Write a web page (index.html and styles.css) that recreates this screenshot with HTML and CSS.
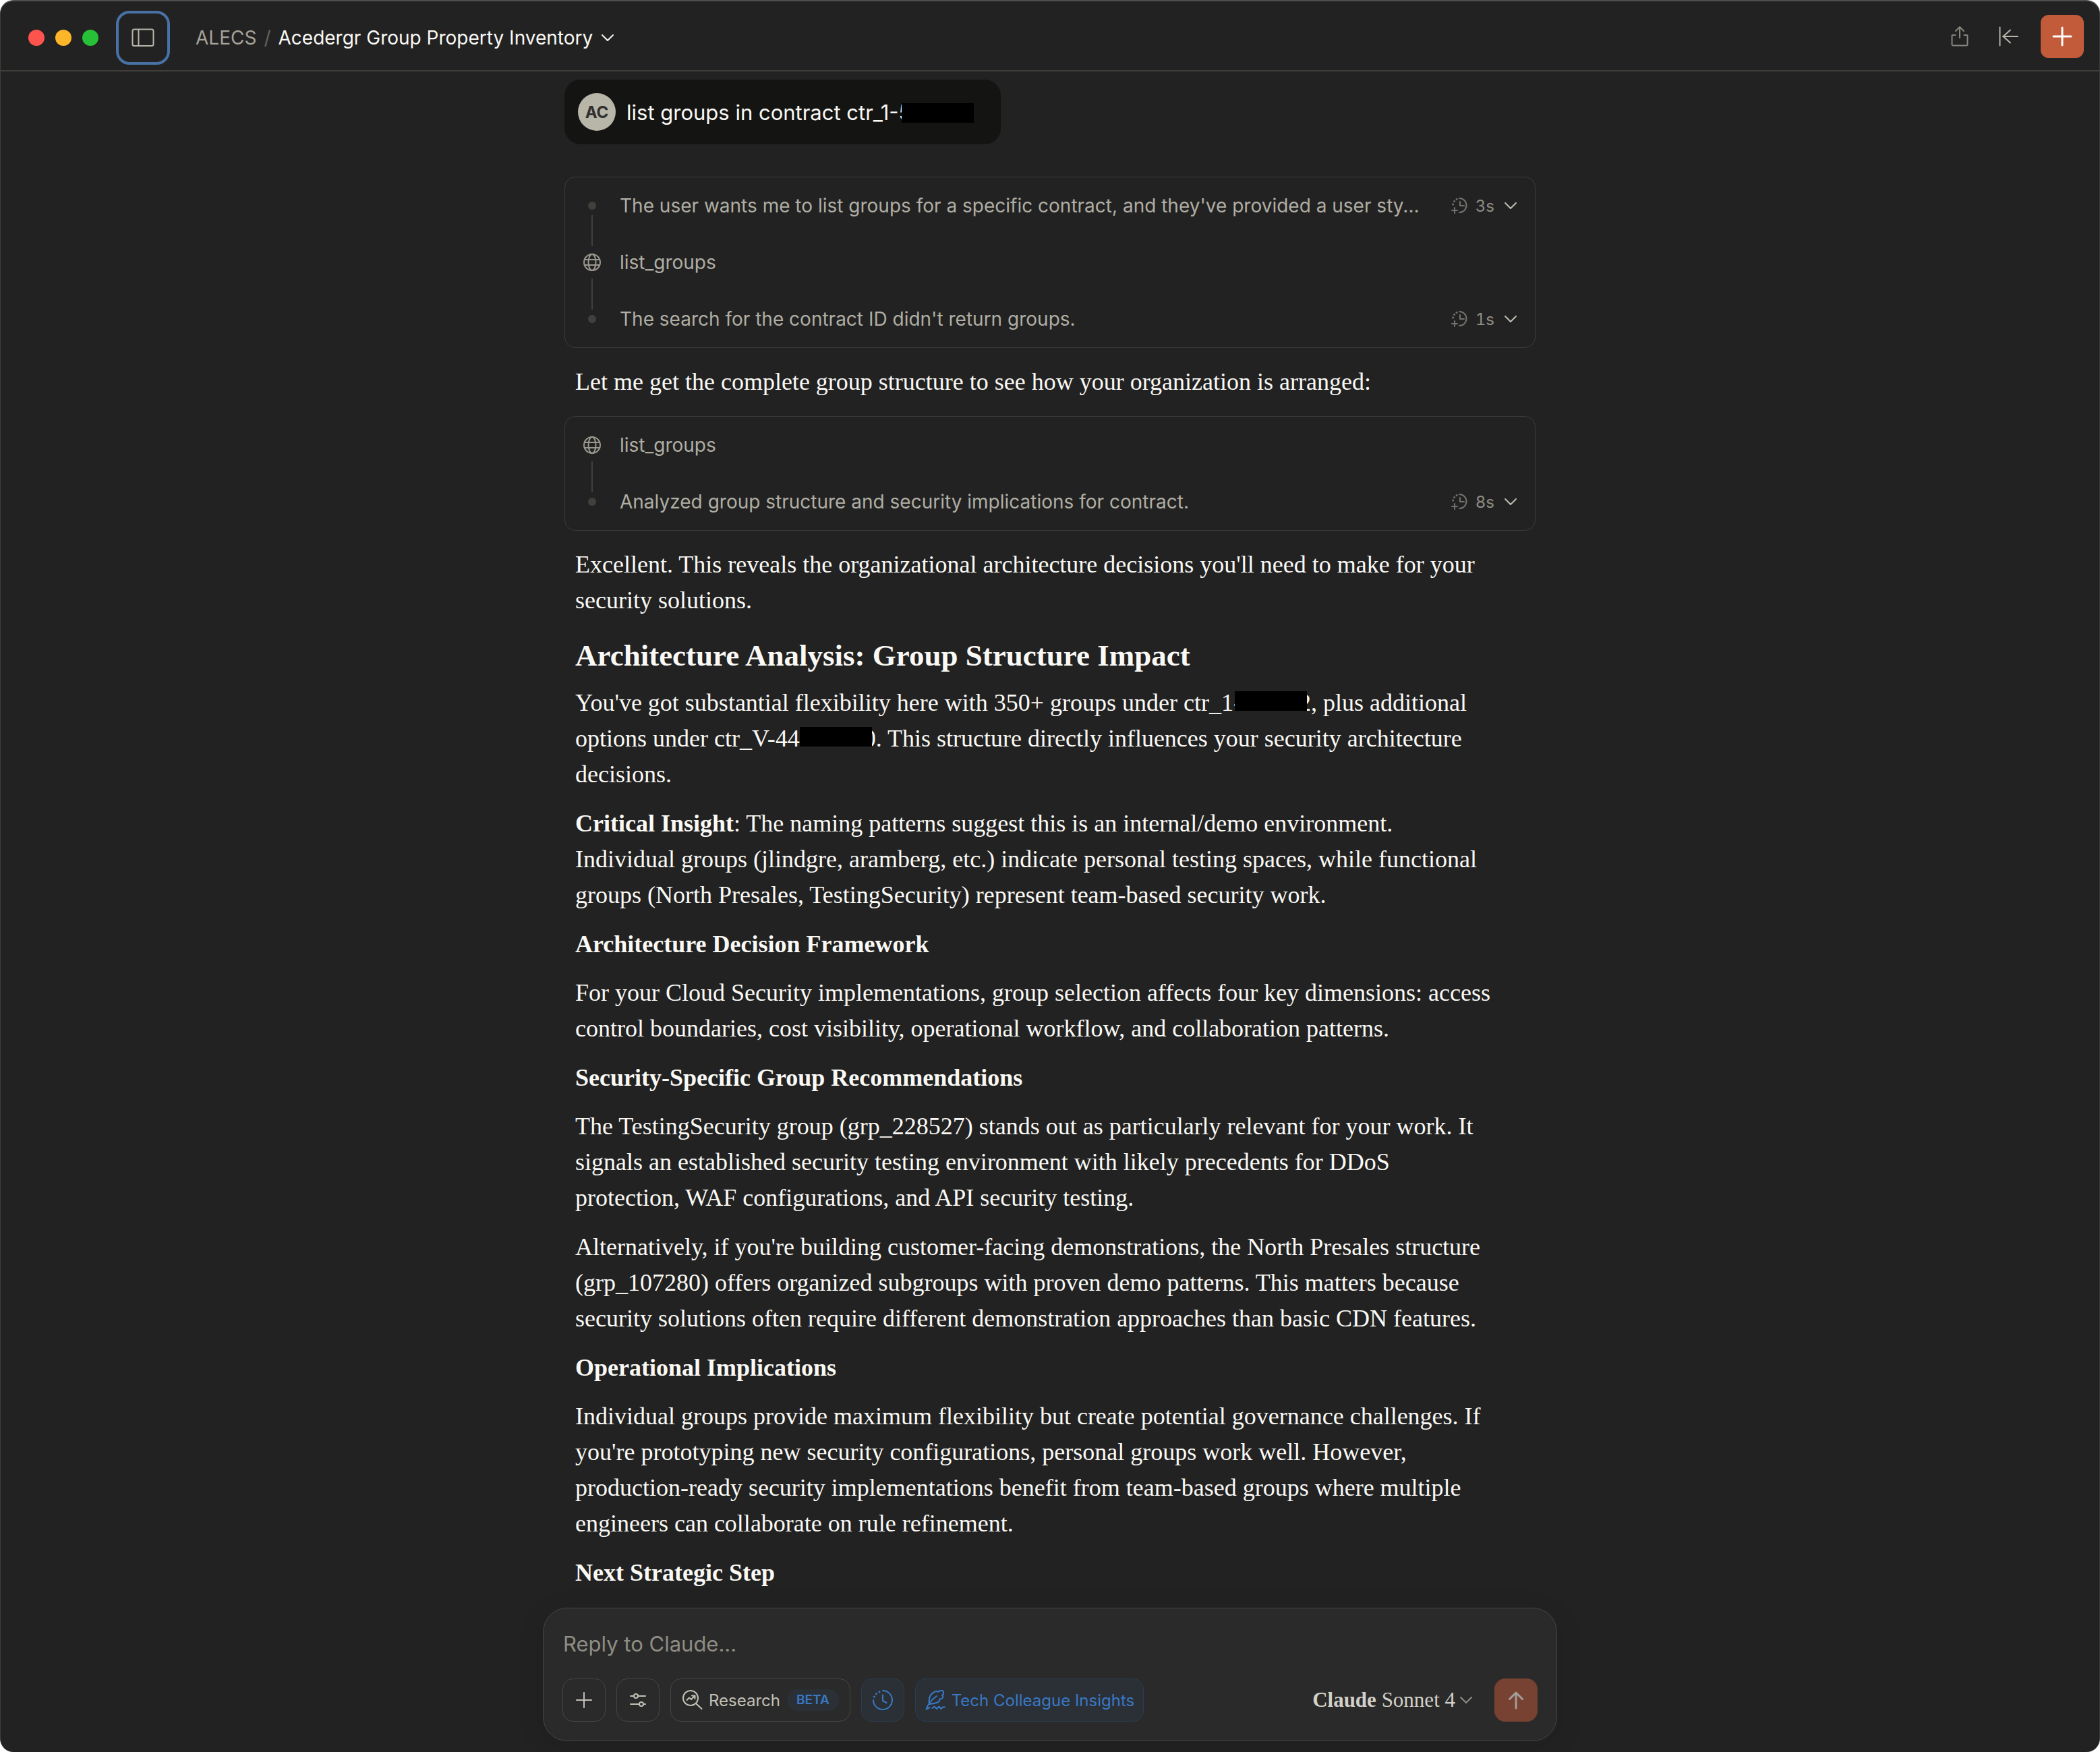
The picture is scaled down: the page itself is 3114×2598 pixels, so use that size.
FILE: index.html
```html
<!DOCTYPE html>
<html lang="en">
<head>
<meta charset="utf-8">
<title>Acedergr Group Property Inventory</title>
<meta name="viewport" content="width=device-width, initial-scale=1">
<link rel="stylesheet" href="styles.css">
</head>
<body>
<svg class="sprite" aria-hidden="true">
  <symbol id="chevron" viewBox="0 0 20 12"><path d="M2 2l8 8 8-8"/></symbol>
  <symbol id="globe" viewBox="0 0 28 28"><circle cx="14" cy="14" r="12"/><ellipse cx="14" cy="14" rx="5.5" ry="12"/><path d="M3 10h22M3 18h22"/></symbol>
  <symbol id="timer" viewBox="0 0 26 26"><path d="M12 2a10.500 10.500 0 1 1 0 21M13 7v6h6M5 16v8M1 20h8"/><path stroke-width="3" d="M8 3.500h.1M4.500 6.500h.1M2.500 11h.1"/></symbol>
</svg>
<div class="window">
  <header class="titlebar">
    <div class="titlebar-left">
      <div class="lights"><span class="light red"></span><span class="light amber"></span><span class="light green"></span></div>
      <button class="sidebar-toggle" type="button" aria-label="Toggle sidebar">
        <svg width="34" height="28" viewBox="0 0 34 28"><rect x="1.500" y="1.500" width="31" height="24.500" rx="2.500"/><path d="M10.500 2v24"/></svg>
      </button>
      <nav class="crumbs" aria-label="Breadcrumb">
        <a class="crumb" href="#">ALECS</a><span class="slash">/</span>
        <button class="chat-title" type="button">Acedergr Group Property Inventory<svg class="chevron" width="20" height="12"><use href="#chevron"/></svg></button>
      </nav>
    </div>
    <div class="titlebar-right">
      <button class="icon-button share" type="button" aria-label="Share">
        <svg width="28" height="32" viewBox="0 0 28 32"><path d="M7.500 14H3.500a1 1 0 0 0-1 1v13a1.500 1.500 0 0 0 1.500 1.500h20a1.500 1.500 0 0 0 1.500-1.500V15a1 1 0 0 0-1-1h-4M14 18V2M8 8l6-6 6 6"/></svg>
      </button>
      <button class="icon-button collapse" type="button" aria-label="Collapse panel">
        <svg width="32" height="32" viewBox="0 0 32 32"><path d="M3.500 2.500v27M30 16H8M19 6.500L8.500 16 19 25.500"/></svg>
      </button>
      <button class="new-chat" type="button" aria-label="New chat">
        <svg width="30" height="30" viewBox="0 0 30 30"><path d="M15 2v26M2 15h26"/></svg>
      </button>
    </div>
  </header>

  <main class="conversation">
    <div class="thread">
      <div class="user-message">
        <span class="avatar">AC</span>
        <p class="user-text">list groups in contract ctr_1-5<span class="redacted"></span></p>
      </div>

      <ul class="steps">
        <li class="step note"><span class="marker"><span class="dot"></span></span><span class="step-text">The user wants me to list groups for a specific contract, and they've provided a user sty...</span>
          <button class="duration" type="button"><svg class="timer" width="26" height="26"><use href="#timer"/></svg>3s<svg class="chevron" width="20" height="12"><use href="#chevron"/></svg></button></li>
        <li class="step tool"><span class="marker"><svg class="globe" width="28" height="28"><use href="#globe"/></svg></span><span class="step-text">list_groups</span></li>
        <li class="step note"><span class="marker"><span class="dot"></span></span><span class="step-text">The search for the contract ID didn't return groups.</span>
          <button class="duration" type="button"><svg class="timer" width="26" height="26"><use href="#timer"/></svg>1s<svg class="chevron" width="20" height="12"><use href="#chevron"/></svg></button></li>
      </ul>

      <div class="prose">
        <p>Let me get the complete group structure to see how your organization is arranged:</p>
      </div>

      <ul class="steps">
        <li class="step tool"><span class="marker"><svg class="globe" width="28" height="28"><use href="#globe"/></svg></span><span class="step-text">list_groups</span></li>
        <li class="step note"><span class="marker"><span class="dot"></span></span><span class="step-text">Analyzed group structure and security implications for contract.</span>
          <button class="duration" type="button"><svg class="timer" width="26" height="26"><use href="#timer"/></svg>8s<svg class="chevron" width="20" height="12"><use href="#chevron"/></svg></button></li>
      </ul>

      <div class="prose">
        <p>Excellent. This reveals the organizational architecture decisions you'll need to make for your security solutions.</p>
        <h2>Architecture Analysis: Group Structure Impact</h2>
        <p>You've got substantial flexibility here with 350+ groups under ctr_1-<span class="redacted"></span><span class="tail">2</span>, plus additional options under ctr_V-44<span class="redacted flush"></span><span class="tail">0</span>. This structure directly influences your security architecture decisions.</p>
        <p><strong>Critical Insight</strong>: The naming patterns suggest this is an internal/demo environment. Individual groups (jlindgre, aramberg, etc.) indicate personal testing spaces, while functional groups (North Presales, TestingSecurity) represent team-based security work.</p>
        <h3>Architecture Decision Framework</h3>
        <p>For your Cloud Security implementations, group selection affects four key dimensions: access control boundaries, cost visibility, operational workflow, and collaboration patterns.</p>
        <h3>Security-Specific Group Recommendations</h3>
        <p>The TestingSecurity group (grp_228527) stands out as particularly relevant for your work. It signals an established security testing environment with likely precedents for DDoS protection, WAF configurations, and API security testing.</p>
        <p>Alternatively, if you're building customer-facing demonstrations, the North Presales structure (grp_107280) offers organized subgroups with proven demo patterns. This matters because security solutions often require different demonstration approaches than basic CDN features.</p>
        <h3>Operational Implications</h3>
        <p>Individual groups provide maximum flexibility but create potential governance challenges. If you're prototyping new security configurations, personal groups work well. However, production-ready security implementations benefit from team-based groups where multiple engineers can collaborate on rule refinement.</p>
        <h3>Next Strategic Step</h3>
      </div>
    </div>
  </main>

  <form class="composer">
    <textarea class="reply" rows="1" aria-label="Reply to Claude" placeholder="Reply to Claude..."></textarea>
    <div class="toolbar">
      <button class="tool-button square" type="button" aria-label="Add content"><svg width="26" height="26" viewBox="0 0 26 26"><path d="M13 2v22M2 13h22"/></svg></button>
      <button class="tool-button square" type="button" aria-label="Tools"><svg width="26" height="26" viewBox="0 0 26 26"><path d="M2 7h5M13 7h11M2 19h13M21 19h3"/><circle cx="10" cy="7" r="3"/><circle cx="18" cy="19" r="3"/></svg></button>
      <button class="tool-button research" type="button"><svg width="32" height="32" viewBox="0 0 32 32"><circle cx="13" cy="13" r="11"/><path d="M21 21l8.500 8M7.500 16l3.500-3.500 3 2.500 5-5M15 9.500h4.500V14"/></svg>Research<span class="badge">BETA</span></button>
      <button class="tool-button square active" type="button" aria-label="Extended thinking"><svg width="32" height="32" viewBox="0 0 32 32"><path d="M16 2a14 14 0 1 1-14 14M16 8.500v8.500l5.500 3"/><path class="dots" d="M10.900 3.700h.1M6.400 6.700h.1M3.300 11h.1"/></svg></button>
      <button class="tool-button style active" type="button"><svg width="32" height="32" viewBox="0 0 32 32"><path d="M2.500 29.500C5 22 10 15.500 18 10M2.500 29.500l5-2.500M7 22C5.500 13 9 6.500 15.500 3.500c1.500-1 3-1 4 .5 2-2 6-2 8-1.500 1 3 .5 5-1.500 6.500 2 1 1.500 3 0 4.500-1.500 1-2.500 1-4 1 1 1.500 0 3.500-2 4.500-4 2-8.500 2.500-13 3M11.500 28l3-2.500 3.500 3.500 3.500-3.500 3 3.500 2.500-2.500h3"/></svg>Tech Colleague Insights</button>
      <button class="model" type="button" aria-haspopup="listbox"><b>Claude</b> Sonnet 4<svg class="chevron" width="20" height="12"><use href="#chevron"/></svg></button>
      <button class="send" type="submit" aria-label="Send message"><svg width="24" height="28" viewBox="0 0 24 28"><path d="M12 26V3M2.500 12.500L12 3l9.500 9.500"/></svg></button>
    </div>
  </form>
</div>
</body>
</html>
```
FILE: styles.css
```css
* { box-sizing: border-box; }

body {
  margin: 0;
  background: #fff;
  color: #faf9f5;
  font-family: Inter, "Liberation Sans", sans-serif;
  font-size: 28px;
}

button {
  display: inline-flex;
  align-items: center;
  justify-content: center;
  margin: 0;
  padding: 0;
  border: 0;
  background: none;
  color: inherit;
  font: inherit;
  white-space: nowrap;
}

svg {
  flex: none;
  fill: none;
  stroke: currentColor;
  stroke-width: 2;
  stroke-linecap: round;
  stroke-linejoin: round;
}

p, ul, h2, h3 { margin: 0; }

.sprite { display: none; }

.window {
  display: flex;
  flex-direction: column;
  height: 100vh;
  overflow: hidden;
  border: 1px solid #3e3e3d;
  border-top: 2px solid #4e4e4d;
  border-bottom: 0;
  border-radius: 20px;
  background: #222222;
}

/* Title bar */
.titlebar {
  display: flex;
  align-items: center;
  justify-content: space-between;
  flex: none;
  height: 104px;
  padding: 0 23px 0 41px;
  border-bottom: 2px solid #3f3e3b;
}

.titlebar-left {
  display: flex;
  align-items: center;
  padding-top: 6px;
}

.lights { display: flex; gap: 16px; margin-right: 26px; }
.light { width: 24px; height: 24px; border-radius: 50%; }
.red { background: #ff544d; }
.amber { background: #fdb52a; }
.green { background: #27c138; }

.sidebar-toggle {
  width: 80px;
  height: 80px;
  margin-right: 38px;
  border: 4px solid #4872a5;
  border-radius: 20px;
  color: #b8b5a9;
}

.crumbs { display: flex; align-items: center; }
.crumb { color: #a6a39a; text-decoration: none; }
.slash { margin: 0 11px; color: #65635e; }
.chat-title .chevron { margin-left: 12px; }

.titlebar-right { display: flex; align-items: center; padding-top: 2px; }
.icon-button { width: 72px; height: 64px; color: #b8b5a9; }
.icon-button.share { color: #86847d; }
.collapse { margin-right: 12px; }

.new-chat {
  width: 64px;
  height: 64px;
  border-radius: 12px;
  background: #c15b3a;
  color: #fff;
}
.new-chat svg { stroke-width: 3; }

/* Conversation */
.conversation {
  flex: 1;
  min-height: 0;
  overflow: hidden;
}

.thread {
  display: flex;
  flex-direction: column;
  align-items: stretch;
  max-width: 1440px;
  margin: 0 auto;
  padding-top: 12px;
}

.user-message {
  display: flex;
  align-items: center;
  align-self: flex-start;
  gap: 16px;
  height: 96px;
  margin-bottom: 48px;
  padding: 0 40px 0 20px;
  border-radius: 24px;
  background: #141413;
  font-size: 31px;
}

.avatar {
  display: flex;
  align-items: center;
  justify-content: center;
  width: 56px;
  height: 56px;
  border-radius: 50%;
  background: #b8b5a9;
  color: #30302e;
  font-size: 24px;
  font-weight: 700;
}

.redacted {
  position: relative;
  display: inline-block;
  width: 107px;
  height: 29px;
  margin-left: -14px;
  background: #000;
  vertical-align: -4px;
}

.steps {
  padding: 0;
  border: 1px solid #3b3b39;
  border-radius: 16px;
  list-style: none;
}

.step {
  display: flex;
  align-items: center;
  height: 84px;
  padding: 0 26px;
  color: #b0aea4;
}

.marker {
  position: relative;
  display: flex;
  align-items: center;
  justify-content: center;
  align-self: stretch;
  width: 28px;
  margin-right: 27px;
}

.dot { width: 12px; height: 12px; border-radius: 50%; background: #41403c; }
.globe { color: #9a988f; }

.step:not(:last-child) .marker::after {
  content: "";
  position: absolute;
  top: 56px;
  left: 13px;
  width: 2px;
  height: 46px;
  background: #41403c;
}
.tool:not(:last-child) .marker::after { top: 66px; }

.step-text { flex: 1; white-space: nowrap; }
.duration { gap: 10px; color: #8f8d85; font-size: 24px; font-variant-numeric: tabular-nums; }
.duration .timer { color: #74726c; }
.duration .chevron { color: #c2c0b6; margin-left: 4px; }

/* Answer text */
.prose {
  padding: 24px 60px 24px 16px;
  font-family: "Liberation Serif", "Times New Roman", serif;
  font-size: 36px;
  line-height: 53px;
}

.prose p + p, .prose h3 { margin-top: 20px; }
.prose h3 + p { margin-top: 19px; }
.prose .redacted { margin-left: -10px; vertical-align: 0; }
.prose .flush { margin-left: 0; }
.tail { margin-left: -12px; }

.prose h2 {
  margin: 28px 0 16px;
  font-size: 45px;
  line-height: 55px;
}
.prose h3 { font-size: 36px; }

/* Composer */
.composer {
  flex: none;
  width: calc(100% - 32px);
  max-width: 1504px;
  margin: 0 auto 16px;
  padding: 28px;
  border: 1px solid #454542;
  border-radius: 36px;
  background: #2a2a2a;
  box-shadow: 0 8px 40px rgba(0, 0, 0, 0.1);
}

.reply {
  display: block;
  width: 100%;
  height: 50px;
  margin-bottom: 26px;
  padding: 0 1px;
  border: 0;
  outline: 0;
  resize: none;
  overflow: hidden;
  background: none;
  color: inherit;
  font-family: inherit;
  font-size: 31px;
  line-height: 50px;
}
.reply::placeholder { color: #8f8d85; opacity: 1; }

.toolbar { display: flex; align-items: center; gap: 16px; }

.tool-button {
  height: 64px;
  border: 1px solid #454542;
  border-radius: 16px;
  color: #c2c0b6;
  font-size: 24px;
}
.square { width: 64px; }
.research { gap: 8px; padding: 0 16px; }
.style { gap: 8px; padding: 0 13px; }
.active { border-color: #2c3c50; background: #2a3036; color: #3a78c4; }

.badge {
  margin-left: 2px;
  padding: 0 14px;
  border-radius: 16px;
  background: #2a3036;
  color: #3a78c4;
  font-size: 19px;
  font-weight: 600;
  line-height: 32px;
}

.dots { stroke-width: 3; }

.model {
  margin-left: auto;
  margin-right: 16px;
  color: #d2d0c8;
  font-family: "Liberation Serif", "Times New Roman", serif;
  font-size: 31px;
  white-space: pre;
}
.model .chevron { margin-left: 6px; color: #8f8d85; }

.send {
  width: 64px;
  height: 64px;
  border-radius: 16px;
  background: #774232;
  color: #a39c98;
}
.send svg { stroke-width: 3; }
```
